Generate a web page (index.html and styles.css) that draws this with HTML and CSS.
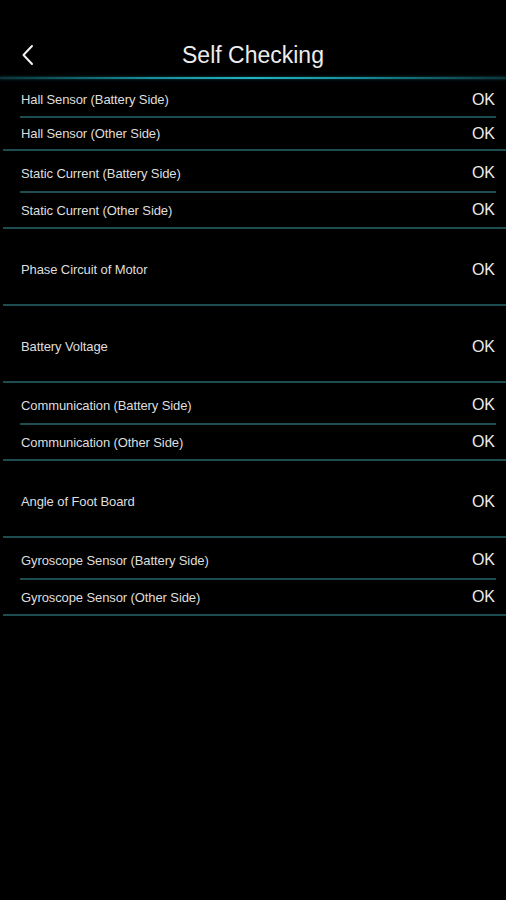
FILE: index.html
```html
<!DOCTYPE html>
<html lang="en">
<head>
    <meta charset="UTF-8">
    <meta name="viewport" content="width=device-width, initial-scale=1.0">
    <title>Self Checking</title>
    <link rel="stylesheet" href="styles.css">
</head>
<body>

    <div class="header">
        <button class="back" aria-label="Back">
            <svg width="14" height="22" viewBox="0 0 14 22">
                <path d="M11 2 L2.5 11 L11 20" fill="none" stroke="#f2f2f2" stroke-width="2" stroke-linecap="round" stroke-linejoin="round"/>
            </svg>
        </button>
        <h1 class="title">Self Checking</h1>
        <span></span>
    </div>
    <div class="header-line"></div>

    <div class="list">
        <div class="group compact">
            <div class="row first"><span class="label">Hall Sensor (Battery Side)</span><span class="status">OK</span></div>
            <div class="divider"></div>
            <div class="row second"><span class="label">Hall Sensor (Other Side)</span><span class="status">OK</span></div>
        </div>
        <div class="group">
            <div class="row first"><span class="label">Static Current (Battery Side)</span><span class="status">OK</span></div>
            <div class="divider"></div>
            <div class="row second"><span class="label">Static Current (Other Side)</span><span class="status">OK</span></div>
        </div>
        <div class="group">
            <div class="row single"><span class="label">Phase Circuit of Motor</span><span class="status">OK</span></div>
        </div>
        <div class="group">
            <div class="row single"><span class="label">Battery Voltage</span><span class="status">OK</span></div>
        </div>
        <div class="group">
            <div class="row first"><span class="label">Communication (Battery Side)</span><span class="status">OK</span></div>
            <div class="divider"></div>
            <div class="row second"><span class="label">Communication (Other Side)</span><span class="status">OK</span></div>
        </div>
        <div class="group">
            <div class="row single"><span class="label">Angle of Foot Board</span><span class="status">OK</span></div>
        </div>
        <div class="group">
            <div class="row first"><span class="label">Gyroscope Sensor (Battery Side)</span><span class="status">OK</span></div>
            <div class="divider"></div>
            <div class="row second"><span class="label">Gyroscope Sensor (Other Side)</span><span class="status">OK</span></div>
        </div>
    </div>

</body>
</html>
```

FILE: styles.css
```css
body {
    margin: 0;
    background-color: #000;
    color: #e6e6e6;
    font-family: "Liberation Sans", Arial, sans-serif;
}
.header {
    box-sizing: border-box;
    height: 77px;
    padding-top: 39px;
    display: grid;
    grid-template-columns: 1fr auto 1fr;
    align-items: start;
}
.back {
    justify-self: start;
    height: 32px;
    margin-left: 21px;
    padding: 0;
    border: none;
    background: none;
    display: flex;
    align-items: center;
    cursor: pointer;
}
.title {
    margin: 0;
    font-size: 23px;
    font-weight: normal;
    line-height: 32px;
    color: #ececec;
}
.header-line {
    height: 2px;
    background: linear-gradient(to right, #0b3439 0%, #178f9c 30%, #22b2c2 50%, #178f9c 70%, #0b3439 100%);
    box-shadow: 0 0 3px rgba(34, 170, 185, 0.5);
}
.group {
    margin-left: 3px;
    border-bottom: 2px solid #1c4d50;
}
.row {
    box-sizing: border-box;
    display: flex;
    justify-content: space-between;
    align-items: center;
    padding: 0 11px 0 18px;
}
.row.first {
    height: 40px;
    padding-top: 4px;
}
.row.second {
    height: 34px;
}
.row.single {
    height: 75px;
    padding-top: 6px;
}
.compact .row.first {
    height: 37px;
}
.compact .row.second {
    height: 31px;
}
.divider {
    height: 2px;
    margin: 0 10px 0 17px;
    background-color: #1c4d50;
}
.label {
    font-size: 13px;
    color: #dedede;
    letter-spacing: -0.1px;
}
.status {
    font-size: 16px;
    color: #ececec;
}
```
